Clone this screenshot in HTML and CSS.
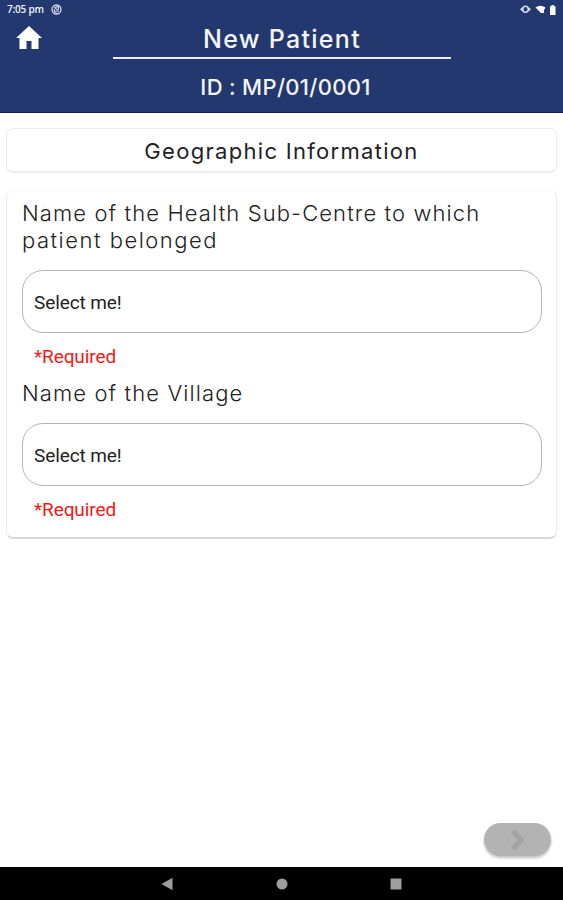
FILE: index.html
```html
<!DOCTYPE html>
<html lang="en">
<head>
    <meta charset="UTF-8">
    <title>New Patient</title>
    <link rel="stylesheet" href="styles.css">
</head>
<body>
    <header class="header">
        <div class="statusbar">
            <span class="time">7:05 pm</span>
            <svg class="sync" width="11" height="11" viewBox="0 0 11 11">
                <circle cx="5.5" cy="5.5" r="4.5" fill="none" stroke="#d5daea" stroke-width="1.3"/>
                <path d="M3.4 3.2l4.4 4.6M4.4 2.8h3v3M3.4 5.2v2.6h2.4" fill="none" stroke="#d5daea" stroke-width="1.2"/>
            </svg>
            <svg class="status-icons" width="38" height="12" viewBox="0 0 38 12">
                <ellipse cx="6.5" cy="6.2" rx="2.8" ry="3" fill="none" stroke="#d5daea" stroke-width="1.6"/>
                <path d="M1 6.2l2.5-2.2v4.4zM12 6.2L9.500 4v4.400z" fill="#d5daea"/>
                <path d="M16.500 4.500q5-3.500 10 0l-1.500 2.500v3h-3z" fill="#fff"/>
                <path d="M31 3.200h1.500V2h2.500v1.200h1.500v9H31z" fill="#fff"/>
            </svg>
        </div>
        <div class="titlebar">
            <svg class="home" width="26" height="24" viewBox="0 0 26 24">
                <path d="M13 0L0 12h3.500v11h7v-8h5v8h7V12H26z" fill="#fff"/>
            </svg>
            <h1 class="title">New Patient</h1>
        </div>
        <p class="patient-id">ID : MP/01/0001</p>
    </header>

    <main class="content">
        <section class="card section-title">
            <h2>Geographic Information</h2>
        </section>

        <section class="card form">
            <p class="label">Name of the Health Sub-Centre to which<br><span class="line2">patient belonged</span></p>
            <div class="select">Select me!</div>
            <p class="required">*Required</p>
            <p class="label">Name of the Village</p>
            <div class="select">Select me!</div>
            <p class="required">*Required</p>
        </section>

        <button class="next">
            <svg width="16" height="22" viewBox="0 0 16 22">
                <path d="M3 2l8 9-8 9" fill="none" stroke="#a2a2a2" stroke-width="5"/>
            </svg>
        </button>
    </main>

    <nav class="navbar">
        <svg width="12" height="14" viewBox="0 0 12 14"><path d="M0.500 7L11.500 0.800v12.400z" fill="#9e9e9e"/></svg>
        <svg width="12" height="12" viewBox="0 0 12 12"><circle cx="6" cy="6" r="5.500" fill="#9e9e9e"/></svg>
        <svg width="12" height="12" viewBox="0 0 12 12"><path d="M0.500 0.500h11v11h-11z" fill="#9e9e9e"/></svg>
    </nav>
</body>
</html>
```
FILE: styles.css
```css
* {
    box-sizing: border-box;
}
body {
    margin: 0;
    height: 100vh;
    display: flex;
    flex-direction: column;
    background-color: white;
    font-family: Inter, "Open Sans", sans-serif;
    color: #222;
}
h1, h2, p {
    margin: 0;
    font-weight: normal;
}
svg {
    display: block;
}
.header {
    height: 113px;
    background-color: #22386f;
    border-bottom: 1px solid #0c1a5c;
    color: #f4f5fb;
}
.statusbar {
    height: 18px;
    padding: 0 6px 0 7px;
    display: flex;
    align-items: center;
}
.time {
    width: 37px;
    margin-right: 7px;
    font-family: "Open Sans", sans-serif;
    font-size: 10px;
    font-weight: 600;
    letter-spacing: -0.2px;
    white-space: nowrap;
}
.status-icons {
    margin-left: auto;
}
.titlebar {
    display: grid;
    grid-template-columns: 113px 338px 1fr;
    height: 41px;
}
.home {
    margin: 8px 0 0 16px;
}
.title {
    height: 41px;
    border-bottom: 2px solid #eeeefa;
    font-size: 25px;
    font-weight: 500;
    line-height: 42px;
    text-align: center;
    letter-spacing: 1.3px;
}
.patient-id {
    padding-left: 8px;
    font-size: 22px;
    font-weight: 500;
    line-height: 56px;
    text-align: center;
    letter-spacing: 0.3px;
}
.content {
    flex: 1;
    display: flex;
    flex-direction: column;
    padding: 15px 6px 0;
}
.card {
    border: 1px solid #ececec;
    border-radius: 7px;
}
.section-title {
    height: 45px;
    border-bottom: 2px solid #ededed;
    text-align: center;
}
.section-title h2 {
    font-size: 22px;
    line-height: 44px;
    letter-spacing: 1.3px;
}
.form {
    height: 349px;
    margin-top: 17px;
    padding: 9px 14px 0 15px;
    border-top-color: #f8f8f8;
    border-bottom: 2px solid #d9d9d9;
}
.label {
    font-size: 22px;
    font-weight: 300;
    line-height: 27px;
    letter-spacing: 1.1px;
    white-space: nowrap;
}
.line2 {
    letter-spacing: 1.5px;
}
.select {
    height: 63px;
    margin-top: 16px;
    padding-left: 11px;
    border: 1px solid #b5b5b5;
    border-radius: 21px;
    font-family: Roboto, sans-serif;
    font-size: 19px;
    line-height: 64px;
    letter-spacing: -0.1px;
}
.required {
    height: 47px;
    padding-left: 12px;
    font-family: Roboto, sans-serif;
    font-size: 19px;
    line-height: 48px;
    letter-spacing: -0.1px;
    color: #f21818;
}
.next {
    width: 67px;
    height: 33px;
    margin: auto 6px 11px auto;
    padding: 0;
    display: flex;
    justify-content: center;
    align-items: center;
    border: none;
    border-radius: 17px;
    background-color: #b3b3b3;
    box-shadow: 0 2px 3px rgba(0, 0, 0, 0.25);
}
.navbar {
    height: 33px;
    padding: 0 161px;
    display: flex;
    justify-content: space-between;
    align-items: center;
    background-color: black;
}
```
